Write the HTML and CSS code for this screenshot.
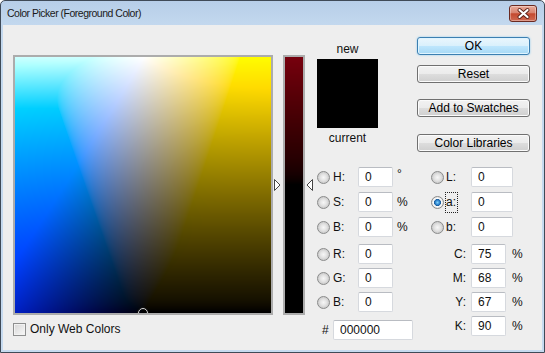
FILE: index.html
```html
<!DOCTYPE html>
<html>
<head>
    <meta charset="utf-8">
    <title>Color Picker (Foreground Color)</title>
    <link rel="stylesheet" href="styles.css">
</head>
<body>
    <div class="window">
        <div class="titlebar">
            <span class="title">Color Picker (Foreground Color)</span>
            <div class="close-btn">
                <svg width="25" height="15" viewBox="0 0 25 15">
                    <path d="M8.5 4 L16.5 11 M16.5 4 L8.5 11" stroke="#5b2118" stroke-width="4" stroke-linecap="round" fill="none"/>
                    <path d="M8.5 4 L16.5 11 M16.5 4 L8.5 11" stroke="#ffffff" stroke-width="2.2" stroke-linecap="round" fill="none"/>
                </svg>
            </div>
        </div>
        <div class="client">
            <div class="picker-col">
                <div class="field">
                    <canvas id="field" width="256" height="256"></canvas>
                    <svg class="ring" width="14" height="14" viewBox="0 0 14 14">
                        <circle cx="7" cy="7" r="5.5" fill="none" stroke="#111" stroke-width="1"/>
                        <circle cx="7" cy="7" r="4.5" fill="none" stroke="#d8d8d8" stroke-width="1"/>
                    </svg>
                </div>
                <div class="web-only">
                    <span class="checkbox"></span>
                    <span>Only Web Colors</span>
                </div>
            </div>

            <div class="slider">
                <canvas id="strip" width="18" height="256"></canvas>
                <svg class="arrow arrow-left" width="7" height="12" viewBox="0 0 7 12">
                    <path d="M0.5 0.5 L6 6 L0.5 11.5 Z" fill="#fff" stroke="#444" stroke-width="1"/>
                </svg>
                <svg class="arrow arrow-right" width="7" height="12" viewBox="0 0 7 12">
                    <path d="M6.5 0.5 L1 6 L6.5 11.5 Z" fill="#fff" stroke="#444" stroke-width="1"/>
                </svg>
            </div>

            <div class="panel">
                <div class="panel-top">
                    <div class="swatch-col">
                        <div class="swatch-label">new</div>
                        <div class="swatch"></div>
                        <div class="swatch-label">current</div>
                    </div>
                    <div class="buttons">
                        <div class="btn btn-default">OK</div>
                        <div class="btn btn-reset">Reset</div>
                        <div class="btn btn-add">Add to Swatches</div>
                        <div class="btn btn-lib">Color Libraries</div>
                    </div>
                </div>

                <div class="fields">
                    <div class="col-left">
                        <div class="row"><span class="radio"></span><span class="lbl">H:</span><input class="num" value="0"><span class="unit deg">&deg;</span></div>
                        <div class="row r-s"><span class="radio"></span><span class="lbl">S:</span><input class="num" value="0"><span class="unit">%</span></div>
                        <div class="row r-b"><span class="radio"></span><span class="lbl">B:</span><input class="num" value="0"><span class="unit">%</span></div>
                        <div class="row r-r"><span class="radio"></span><span class="lbl">R:</span><input class="num" value="0"></div>
                        <div class="row r-g"><span class="radio"></span><span class="lbl">G:</span><input class="num" value="0"></div>
                        <div class="row r-bl"><span class="radio"></span><span class="lbl">B:</span><input class="num" value="0"></div>
                        <div class="row r-hex"><span class="hash">#</span><input class="num hex" value="000000"></div>
                    </div>
                    <div class="col-right">
                        <div class="row"><span class="radio"></span><span class="lbl lab">L:</span><input class="num wide" value="0"></div>
                        <div class="row r-s"><span class="radio checked"></span><span class="lbl lab"><span class="focus">a:</span></span><input class="num wide" value="0"></div>
                        <div class="row r-b"><span class="radio"></span><span class="lbl lab">b:</span><input class="num wide" value="0"></div>
                        <div class="row r-r"><span class="lbl cmyk">C:</span><input class="num" value="75"><span class="unit pct">%</span></div>
                        <div class="row r-g"><span class="lbl cmyk">M:</span><input class="num" value="68"><span class="unit pct">%</span></div>
                        <div class="row r-bl"><span class="lbl cmyk">Y:</span><input class="num" value="67"><span class="unit pct">%</span></div>
                        <div class="row r-k"><span class="lbl cmyk">K:</span><input class="num" value="90"><span class="unit pct">%</span></div>
                    </div>
                </div>
            </div>
        </div>
    </div>
    <script src="script.js"></script>
</body>
</html>
```

FILE: styles.css
```css
body {
    margin: 0;
    background: #ffffff;
    font-family: "Liberation Sans", Arial, sans-serif;
    font-size: 12px;
    color: #111;
}

.window {
    width: 545px;
    height: 353px;
    box-sizing: border-box;
    border: 1px solid #3f4a57;
    border-radius: 5px 5px 0 0;
    background: linear-gradient(#b7cee8, #c3d8ee 24px, #c6daef);
    padding: 0 2px 2px 2px;
    display: flex;
    flex-direction: column;
    overflow: hidden;
}

.titlebar {
    height: 24px;
    flex-shrink: 0;
    display: flex;
    align-items: center;
    justify-content: space-between;
    padding: 0 5px 0 4px;
}

.title {
    font-size: 10.5px;
    letter-spacing: -0.5px;
    color: #1a1a1a;
}

.close-btn {
    width: 28px;
    height: 17px;
    box-sizing: border-box;
    border: 1px solid #6a2a21;
    border-radius: 3px;
    background: linear-gradient(#e8ab9a, #d88470 45%, #c4492f 52%, #cf6a52);
    box-shadow: inset 0 0 0 1px rgba(255, 255, 255, 0.35);
}

.close-btn svg {
    display: block;
    margin-left: 0.5px;
}

.client {
    flex: 1;
    background: #eeeeee;
    display: flex;
    align-items: flex-start;
    padding-left: 10px;
}

canvas {
    display: block;
}

/* colour field */
.picker-col {
    margin-top: 30px;
    width: 260px;
}

.field {
    position: relative;
    width: 256px;
    height: 256px;
    border: 2px solid #acacac;
    overflow: hidden;
}

.ring {
    position: absolute;
    left: 121px;
    top: 249px;
}

.web-only {
    display: flex;
    align-items: center;
    gap: 4px;
    margin-top: 7px;
    font-size: 12px;
}

.checkbox {
    width: 13px;
    height: 13px;
    box-sizing: border-box;
    border: 1px solid #8e8f8f;
    background: linear-gradient(135deg, #d6d6d6, #f8f8f8);
    box-shadow: inset 0 0 0 1px #f2f2f2;
}

/* a-channel slider */
.slider {
    position: relative;
    margin-top: 30px;
    margin-left: 10px;
    width: 18px;
    height: 256px;
    border: 2px solid #acacac;
}

.arrow {
    position: absolute;
    top: 122px;
}

.arrow-left {
    left: -11px;
}

.arrow-right {
    left: 21px;
}

/* right side */
.panel {
    margin-top: 12px;
    margin-left: 12px;
}

.panel-top {
    display: flex;
    height: 130px;
}

.swatch-col {
    width: 61px;
    margin-top: 5px;
    text-align: center;
}

.swatch-label {
    line-height: 14px;
}

.swatch {
    height: 69px;
    margin: 3px 0;
    background: #000;
}

.buttons {
    margin-left: 39px;
    width: 113px;
}

.btn {
    height: 18px;
    box-sizing: border-box;
    border: 1px solid #707070;
    border-radius: 3px;
    background: linear-gradient(#f2f2f2, #ebebeb 50%, #dddddd 51%, #cfcfcf);
    box-shadow: inset 0 0 0 1px #fbfbfb;
    text-align: center;
    line-height: 16px;
    color: #000;
}

.btn-default {
    border-color: #3c7fb1;
    background: linear-gradient(#eaf6fd, #d9f0fc 50%, #bee6fd 51%, #a7d9f5);
    box-shadow: inset 0 0 0 1px #dff4ff, 0 0 2px #7fc6f0;
}

.btn-reset {
    margin-top: 10px;
}

.btn-add {
    margin-top: 16px;
}

.btn-lib {
    margin-top: 17px;
}

/* numeric fields */
.fields {
    display: flex;
}

.col-left {
    width: 114px;
}

.row {
    display: flex;
    align-items: center;
    height: 20px;
}

.r-s,
.r-b {
    margin-top: 5px;
}

.r-r {
    margin-top: 7px;
}

.r-g,
.r-bl,
.r-k {
    margin-top: 4px;
}

.r-hex {
    margin-top: 8px;
}

.radio {
    width: 13px;
    height: 13px;
    box-sizing: border-box;
    border-radius: 50%;
    border: 1px solid #8a8b8b;
    background: radial-gradient(circle, #f7f7f7 0, #e4e4e4 3px, #cdcdcd 5.5px);
}

.radio.checked {
    background: radial-gradient(circle, #7fd3fb 0, #2c80cc 2.3px, #1b5d9c 3.2px, #ffffff 3.8px, #ededed 5px, #d0d0d0 6px);
}

.lbl {
    width: 25px;
    margin-left: 3px;
    color: #111;
}

.lbl.lab {
    margin-left: 2px;
}

.focus {
    outline: 1px dotted #222;
    padding: 2px 1px 3px 0;
}

.lbl.cmyk {
    width: 35px;
    margin: 0 5px 0 0;
    text-align: right;
}

.num {
    width: 35px;
    height: 20px;
    box-sizing: border-box;
    margin: 0;
    padding: 0 0 0 6px;
    border: 1px solid #d6d9de;
    border-top-color: #b9bcc2;
    border-radius: 2px;
    background: #fff;
    font: inherit;
    color: #111;
    outline: none;
}

.num.wide {
    width: 42px;
}

.unit {
    margin-left: 4px;
}

.unit.deg {
    align-self: flex-start;
}

.unit.pct {
    margin-left: 6px;
}

.hash {
    width: 16px;
    padding-left: 5px;
    box-sizing: border-box;
}

.num.hex {
    width: 80px;
}
```

FILE: script.js
```js
// Lab (D50) -> sRGB, clipped like the picker does
function gam(c) {
    c = Math.min(1, Math.max(0, c));
    return c <= 0.0031308 ? 12.92 * c : 1.055 * Math.pow(c, 1 / 2.4) - 0.055;
}

function finv(t) {
    return t > 6 / 29 ? t * t * t : 3 * (6 / 29) * (6 / 29) * (t - 4 / 29);
}

function labToRgb(L, a, b) {
    var fy = (L + 16) / 116;
    var fx = fy + a / 500;
    var fz = fy - b / 200;
    var X = Math.max(0, finv(fx)) * 0.96422;
    var Y = Math.max(0, finv(fy));
    var Z = Math.max(0, finv(fz)) * 0.82521;
    var r = 3.1338561 * X - 1.6168667 * Y - 0.4906146 * Z;
    var g = -0.9787684 * X + 1.9161415 * Y + 0.0334540 * Z;
    var bl = 0.0719453 * X - 0.2289914 * Y + 1.4052427 * Z;
    return [gam(r), gam(g), gam(bl)];
}

function paint(id, w, h, fn) {
    var ctx = document.getElementById(id).getContext('2d');
    var img = ctx.createImageData(w, h);
    for (var y = 0; y < h; y++) {
        for (var x = 0; x < w; x++) {
            var c = fn(x, y);
            var i = (y * w + x) * 4;
            img.data[i] = Math.round(c[0] * 255);
            img.data[i + 1] = Math.round(c[1] * 255);
            img.data[i + 2] = Math.round(c[2] * 255);
            img.data[i + 3] = 255;
        }
    }
    ctx.putImageData(img, 0, 0);
}

// field: L vertical, b horizontal, a = 0
paint('field', 256, 256, function (x, y) {
    var L = 100 * (1 - y / 255);
    var c = labToRgb(L, 0, x - 128);
    var lift = Math.min(1, Math.max(0, (L - 80) / 20)) * 0.8;
    c[0] = Math.max(c[0], lift);
    return c;
});

// slider: a from +127 to -128, L = 0, b = 0
paint('strip', 18, 256, function (x, y) {
    return labToRgb(0, 127 - y, 0);
});
```
